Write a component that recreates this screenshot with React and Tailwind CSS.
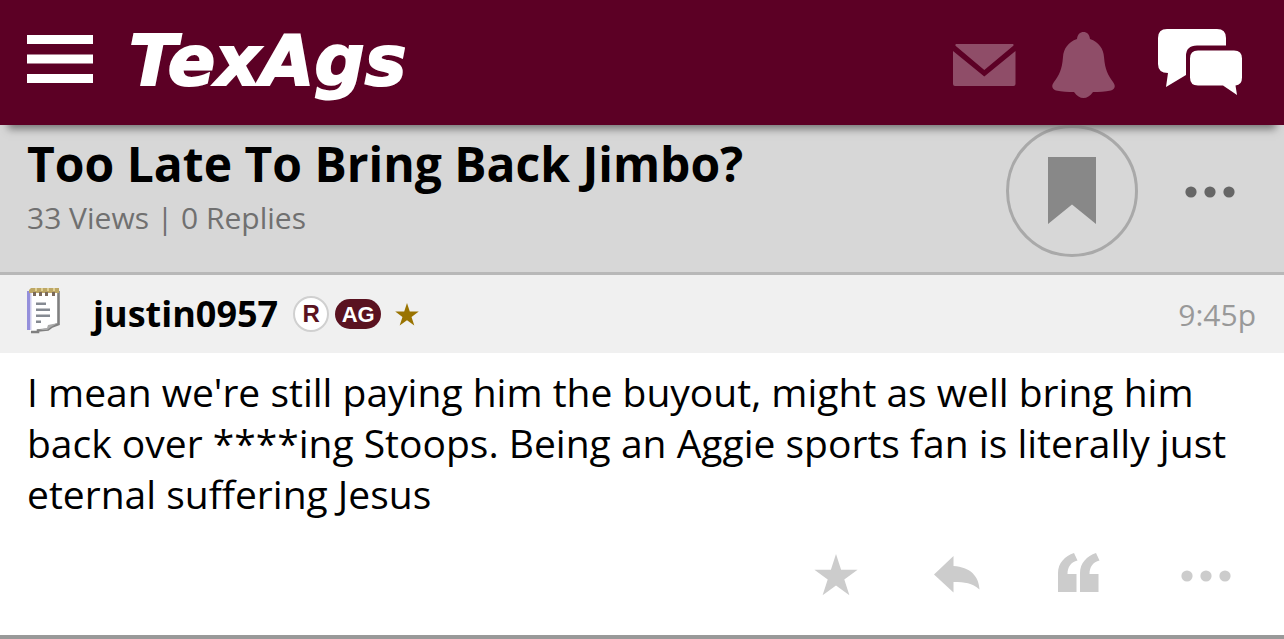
const STAR =
  "M22 0L27.1 15.7H43.6L30.3 25.5L35.4 41.2L22 31.5L8.6 41.2L13.7 25.5L0.4 15.7H16.9Z";

const MenuIcon = () => (
  <svg viewBox="0 0 66 48" className="w-[66px] h-12" fill="currentColor">
    <path d="M0 0H66V9H0ZM0 19.5H66V28.5H0ZM0 39H66V48H0Z" />
  </svg>
);

const MailIcon = () => (
  <svg viewBox="0 0 63 42" className="w-[63px] h-[42px]" fill="currentColor">
    <path d="M3 0H60Q61.5 .8 60 2L31.3 26L2.8 2Q1.5 .8 3 0Z" />
    <path d="M0 7L31.3 32.5L62.5 7V40Q62.5 42 60.5 42H2Q0 42 0 40Z" />
  </svg>
);

const BellIcon = () => (
  <svg viewBox="0 0 63 66" className="w-[63px] h-[66px]" fill="currentColor">
    <path d="M31.5 0C28 0 25.5 2.5 25 7C16 10 11.5 17 11 25C10 38 7 43 2 50C-1 54 0 57 4 58.5C10 60 16 60 22 60C25 64 28 66 31.5 66C35 66 38 64 41 60C47 60 53 60 59 58.5C63 57 64 54 61 50C56 43 53 38 52 25C51.5 17 47 10 38 7C37.5 2.5 35 0 31.5 0Z" />
  </svg>
);

const ChatIcon = () => (
  <svg viewBox="0 0 84 66" className="w-[84px] h-[66px]" fill="currentColor">
    <path d="M9 0H59Q68 0 68 9V16.5H39Q28 16.5 28 27V46L8 58L10 44Q0 44 0 35V9Q0 0 9 0Z" />
    <path d="M40 21.5H76Q84 21.5 84 29.5V48.5Q84 56 77.5 56.5L79 66L65 56.5H40Q32 56.5 32 48.5V29.5Q32 21.5 40 21.5Z" />
  </svg>
);

const DotsIcon = () => (
  <svg viewBox="0 0 50 12" className="w-[50px] h-3" fill="currentColor">
    <circle cx="6" cy="6" r="5.6" />
    <circle cx="25" cy="6" r="5.6" />
    <circle cx="44" cy="6" r="5.6" />
  </svg>
);

const NotepadIcon = () => (
  <svg viewBox="0 0 34 47" className="w-[34px] h-[47px] shrink-0">
    <path d="M3 4H31V37L24 40L20 43L5 45L3 44Z" fill="#fff" />
    <path
      d="M31.5 4V37L25 39.5L21 42.5L11 43.5V45H4"
      fill="none"
      stroke="#808080"
      strokeWidth="2.6"
    />
    <path d="M21 38L31 36L24 40L20 43L11 43L20 41Z" fill="#aaa" />
    <path d="M0 4H3V43H0Z" fill="#948fdb" />
    <path d="M3 5H4.5V43H3Z" fill="#cfcdee" />
    <path d="M4 1H32V6H2V3Z" fill="#bda765" />
    <path d="M8 1H10V4H8ZM14 1H16V4H14ZM20 1H22V4H20ZM26 1H28V4H26Z" fill="#e0cf94" />
    <path d="M6 5H9V9H6ZM12 5H15V9H12ZM18 5H21V9H18ZM25 5H28V9H25Z" fill="#7b6a5c" />
    <path d="M9 15.5H19V18H9ZM9 21.5H23V24H9ZM9 27.5H23V30H9ZM9 33.5H14V36H9Z" fill="#858a92" />
  </svg>
);

const App = () => {
  return (
    <div className="bg-white font-['Open_Sans',sans-serif] text-black">
      {/* Top bar */}
      <header className="relative z-10 flex h-[125px] items-center justify-between bg-[#5c0025] pl-[27px] pr-[42px] text-white shadow-[0_12px_8px_-8px_#777]">
        <div className="flex items-center gap-9">
          <button type="button" aria-label="Menu" className="mb-2">
            <MenuIcon />
          </button>
          <a
            href="#"
            className="pb-1 font-['DejaVu_Sans',sans-serif] text-[70px] leading-[70px] font-bold italic [-webkit-text-stroke:2px_white]"
          >
            TexAgs
          </a>
        </div>
        <nav className="flex items-center">
          <a href="#" aria-label="Mail" className="mt-1 mr-9 text-[#8f4d68]">
            <MailIcon />
          </a>
          <a href="#" aria-label="Notifications" className="mt-1 mr-[43px] text-[#8f4d68]">
            <BellIcon />
          </a>
          <a href="#" aria-label="Forums" className="pb-0.5">
            <ChatIcon />
          </a>
        </nav>
      </header>

      {/* Thread title */}
      <section className="flex items-start justify-between border-b-[3px] border-[#b8b8b8] bg-[#d7d7d7] pl-[27px] pr-[49px]">
        <div className="pt-[9px]">
          <h1 className="text-5xl leading-[60px] font-bold">Too Late To Bring Back Jimbo?</h1>
          <p className="text-3xl leading-[48px] text-[#707070]">33 Views | 0 Replies</p>
        </div>
        <div className="flex items-center gap-[47px] pb-[15px]">
          <button
            type="button"
            aria-label="Bookmark"
            className="flex size-[132px] items-center justify-center rounded-full border-[3px] border-[#a9a9a9] pb-0.5 text-[#888]"
          >
            <svg viewBox="0 0 48 67" className="h-[67px] w-12" fill="currentColor">
              <path d="M0 0H48V67L24 47.5L0 67Z" />
            </svg>
          </button>
          <button type="button" aria-label="Thread options" className="pt-0.5 text-[#666]">
            <DotsIcon />
          </button>
        </div>
      </section>

      {/* Post */}
      <article className="border-b-4 border-[#999]">
        <div className="flex h-[78px] items-center bg-[#f0f0f0] pl-[27px] pr-7">
          <div className="pb-2">
            <NotepadIcon />
          </div>
          <a href="#" className="ml-8 text-4xl font-bold">
            justin0957
          </a>
          <span className="ml-[15px] flex size-9 items-center justify-center rounded-full border-2 border-[#d0d0d0] bg-white font-['Liberation_Sans',sans-serif] text-2xl font-bold text-[#5a1220]">
            R
          </span>
          <span className="ml-1.5 flex h-[30px] w-[46px] items-center justify-center rounded-full bg-[#5a1220] font-['Liberation_Sans',sans-serif] text-[22px] font-bold text-white">
            AG
          </span>
          <svg viewBox="0 0 44 42" className="ml-3.5 h-[23px] w-6" fill="#997300">
            <path d={STAR} />
          </svg>
          <time className="ml-auto pt-0.5 text-3xl text-[#999]">9:45p</time>
        </div>
        <p className="px-[27px] pt-[13px] text-[39px] leading-[51px]">
          I mean we're still paying him the buyout, might as well bring him back over ****ing
          Stoops. Being an Aggie sports fan is literally just eternal suffering Jesus
        </p>
        <div className="flex items-center justify-end pt-[34px] pr-[53px] pb-[39px] text-[#ccc]">
          <button type="button" aria-label="Star" className="mr-[76px]">
            <svg viewBox="0 0 44 42" className="h-[42px] w-11" fill="currentColor">
              <path d={STAR} />
            </svg>
          </button>
          <button type="button" aria-label="Reply" className="mr-[78px]">
            <svg viewBox="0 0 46 37" className="h-[37px] w-[46px]" fill="currentColor">
              <path d="M0 18.5L19.5 0V10C36 11 45 20 45.5 33.5C38 27 31 26 19.5 26V36.5Z" />
            </svg>
          </button>
          <button type="button" aria-label="Quote" className="mr-[81px] pb-1">
            <svg viewBox="0 0 42 39" className="h-[39px] w-[42px]" fill="currentColor">
              <path d="M0 39V20C0 10 7 3 16 0L19.5 7.5C13 9 9.5 14 9.5 21H18.5V39Z" />
              <path d="M22 39V20C22 10 29 3 38 0L41.5 7.5C35 9 31.5 14 31.5 21H40.5V39Z" />
            </svg>
          </button>
          <button type="button" aria-label="Post options" className="pt-0.5">
            <DotsIcon />
          </button>
        </div>
      </article>
    </div>
  );
};

export default App;
